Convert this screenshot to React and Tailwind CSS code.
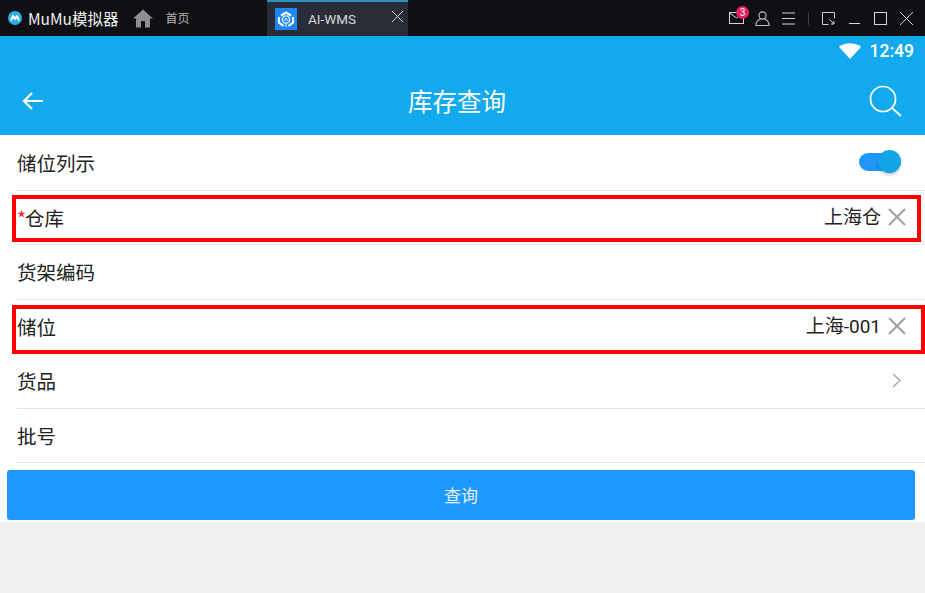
import React from 'react'

const cjk = "font-['Noto_Sans_CJK_SC','Noto_Sans',sans-serif]"
const valueFont = "font-['Roboto','Noto_Sans_CJK_SC',sans-serif]"

const MuMuLogo = () => (
  <svg width="14" height="14" viewBox="0 0 14 14">
    <circle cx="7" cy="7" r="7" fill="#29aee6" />
    <path d="M3 9.5 L5 5 L7 8 L9 5 L11 9.5" fill="none" stroke="#fff" strokeWidth="2" strokeLinejoin="round" />
  </svg>
)

const HomeIcon = () => (
  <svg width="20" height="19" viewBox="0 0 20 19">
    <path d="M10 0.5 L20 9.5 L17 9.5 L17 18.5 L12 18.5 L12 12 L8 12 L8 18.5 L3 18.5 L3 9.5 L0 9.5 Z" fill="#8f8f8f" />
  </svg>
)

const AppIcon = () => (
  <div className="flex h-[22px] w-[22px] items-center justify-center bg-[#1c86f5]">
    <svg width="18" height="19" viewBox="0 0 18 19" fill="none">
      <path d="M4 5.5 L9 2.5 L14 5.5 M16 7 V12.5 L11.5 16 M2 7 V12.5 L6.5 16" stroke="#fff" strokeWidth="2.2" />
      <circle cx="9" cy="9.5" r="3.6" stroke="#e4f1ff" strokeWidth="1.4" />
      <path d="M7.5 11 L9 7.8 L10.5 11 M9 13 V17" stroke="#e4f1ff" strokeWidth="1" />
    </svg>
  </div>
)

const WinIcons = () => (
  <div className="flex items-center">
    <div className="relative ml-[729px]">
      <svg width="15" height="12" viewBox="0 0 15 12" fill="none" stroke="#d8d8d8" strokeWidth="1">
        <rect x="0.5" y="0.5" width="14" height="11" />
        <path d="M0.5 1 L7.5 6 L11 3.5" />
      </svg>
      <span className="absolute -right-[5px] -top-[6px] flex h-[13px] w-[13px] items-center justify-center rounded-full bg-[#ea1f63] font-['Liberation_Sans',sans-serif] text-[10px] leading-none text-white">3</span>
    </div>
    <svg className="ml-[11px]" width="15" height="15" viewBox="0 0 15 15" fill="none" stroke="#c8c8c8" strokeWidth="1.1">
      <circle cx="7.5" cy="4.5" r="3.6" />
      <path d="M0.8 14.5 C1 10.5 4 8.6 5.5 8 M14.2 14.5 C14 10.5 11 8.6 9.5 8 M0.8 14.5 L14.2 14.5" />
    </svg>
    <svg className="ml-[12px]" width="13" height="13" viewBox="0 0 13 13" stroke="#d0d0d0" strokeWidth="1">
      <path d="M0 1 H13 M0 6.5 H13 M0 12 H13" />
    </svg>
    <div className="ml-[13px] h-[13px] w-px bg-[#3c3c3c]" />
    <svg className="ml-[13px]" width="13" height="13" viewBox="0 0 13 13" fill="none" stroke="#d0d0d0" strokeWidth="1">
      <path d="M6.5 12.5 H0.5 V0.5 H12.5 V6.5" />
      <path d="M7.5 7.5 L12 12 M12 9 V12 H9" />
    </svg>
    <div className="ml-[14px] mt-[11px] h-px w-[11px] bg-[#d8d8d8]" />
    <div className="ml-[14px] h-[13px] w-[13px] border border-[#d8d8d8]" />
    <svg className="ml-[13px]" width="13" height="13" viewBox="0 0 13 13" stroke="#d8d8d8" strokeWidth="1">
      <path d="M0 0 L13 13 M13 0 L0 13" />
    </svg>
  </div>
)

const TitleBar = () => (
  <div className="relative flex h-9 items-center bg-[#0f1013]">
    <div className="absolute left-2 top-[8px] flex items-center">
      <MuMuLogo />
      <span className={`ml-[6px] text-[15.5px] leading-[20px] text-[#f2f2f2] ${cjk}`}>MuMu模拟器</span>
      <div className="ml-[14px]"><HomeIcon /></div>
      <span className={`ml-[13px] text-[12px] text-[#b5b5b5] ${cjk}`}>首页</span>
    </div>
    <div className="absolute left-[267px] top-0 flex h-9 w-[141px] items-center border-t-2 border-[#2f8fc0] bg-[#2a2d38] pl-2">
      <AppIcon />
      <span className="ml-[11px] font-['Roboto',sans-serif] text-[13.5px] text-[#d8d8d8]">AI-WMS</span>
      <svg className="absolute right-[5px] top-[9px]" width="11" height="11" viewBox="0 0 11 11" stroke="#d8d8d8" strokeWidth="1">
        <path d="M0 0 L11 11 M11 0 L0 11" />
      </svg>
    </div>
    <WinIcons />
  </div>
)

const Header = () => (
  <div className="h-[99px] bg-[#12a9ee]">
    <div className="flex h-[30px] items-center justify-end pr-[11px]">
      <svg width="22" height="16" viewBox="0 0 22 16">
        <path d="M0 4 C6 -1 16 -1 22 4 L11 16 Z" fill="#fff" />
      </svg>
      <span className="ml-[9px] mt-[1px] font-['Roboto',sans-serif] text-[17.5px] font-medium text-white">12:49</span>
    </div>
    <div className="relative flex h-[69px] items-center justify-center pr-[11px]">
      <svg className="absolute left-[22px] top-[26px]" width="21" height="18" viewBox="0 0 21 18" fill="none" stroke="#fff" strokeWidth="2.2">
        <path d="M21 9 H2 M10 1 L2 9 L10 17" />
      </svg>
      <span className={`mt-[2px] text-[24.5px] leading-none text-white ${cjk}`}>库存查询</span>
      <svg className="absolute right-[23px] top-[19px]" width="33" height="33" viewBox="0 0 33 33" fill="none" stroke="#fff" strokeWidth="1.7">
        <circle cx="14" cy="14" r="12.5" />
        <path d="M23 23 L32 31" />
      </svg>
    </div>
  </div>
)

const ClearIcon = () => (
  <svg className="ml-[7px]" width="18" height="18" viewBox="0 0 18 18" stroke="#a0a0a0" strokeWidth="2">
    <path d="M1 1 L17 17 M17 1 L1 17" />
  </svg>
)

const Chevron = () => (
  <svg className="mr-[5px]" width="9" height="15" viewBox="0 0 9 15" fill="none" stroke="#a8a8a8" strokeWidth="1.5">
    <path d="M1 1 L8 7.5 L1 14" />
  </svg>
)

const Row = ({ label, required, right, first }) => (
  <div className={`ml-[17px] flex items-center border-b border-[#e3e3e3] pr-[19px] ${first ? 'h-[55.5px]' : 'h-[54.5px]'}`}>
    <span className={`text-[19.5px] leading-none text-[#222] ${cjk}`}>
      {required && <span className="-mr-px text-[#e8202a]">*</span>}
      {label}
    </span>
    <div className="ml-auto flex items-center">{right}</div>
  </div>
)

const Value = ({ text }) => (
  <>
    <span className={`text-[19px] leading-none text-[#222] ${valueFont}`}>{text}</span>
    <ClearIcon />
  </>
)

const Toggle = () => (
  <div className="relative mr-[5px] h-[18px] w-[42px] rounded-full bg-[#2196fa]">
    <div className="absolute -top-[3px] right-0 h-[23px] w-[23px] rounded-full bg-[#12a5e8] shadow-[0_2px_3px_rgba(0,0,0,0.2)]" />
  </div>
)

export default function App() {
  return (
    <div className="relative h-[593px] w-[925px] overflow-hidden bg-[#f0f0f0]">
      <TitleBar />
      <Header />
      <div className="bg-white">
        <Row first label="储位列示" right={<Toggle />} />
        <Row label="仓库" required right={<Value text="上海仓" />} />
        <Row label="货架编码" />
        <Row label="储位" right={<Value text="上海-001" />} />
        <Row label="货品" right={<Chevron />} />
        <Row label="批号" />
        <div className="pb-[2px] pl-[7px] pr-[10px] pt-[7px]">
          <button className={`block h-[50px] w-full rounded-[3px] bg-[#1e98ff] text-[17px] text-[#e6f3ff] ${cjk}`}>查询</button>
        </div>
      </div>
      <div className="absolute left-[12px] top-[195px] h-[47px] w-[909px] border-[4.5px] border-[#f00]" />
      <div className="absolute left-[12px] top-[305px] h-[49px] w-[913px] border-[4.5px] border-[#f00]" />
    </div>
  )
}
